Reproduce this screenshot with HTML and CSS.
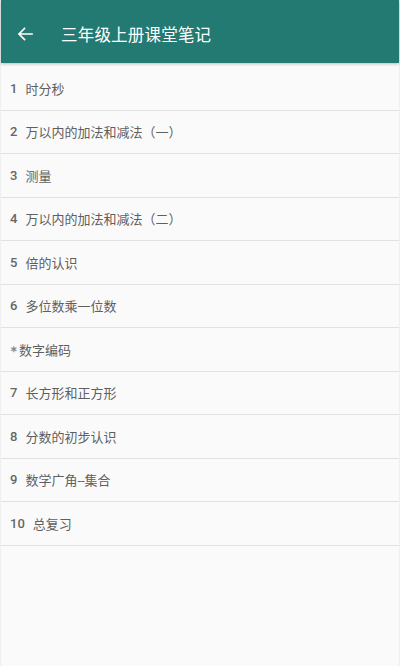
FILE: index.html
```html
<!DOCTYPE html>
<html lang="zh">
<head>
<meta charset="utf-8">
<link rel="stylesheet" href="styles.css">
</head>
<body>
<div class="app">
  <header class="toolbar">
    <svg class="back" viewBox="0 0 24 24" width="24" height="24"><path d="M19 12H6M11.5 6.5L6 12l5.5 5.5" fill="none" stroke="#fff" stroke-width="1.7" stroke-linecap="square"/></svg>
    <h1 class="title">三年级上册课堂笔记</h1>
  </header>
  <ul class="list">
    <li class="row"><span class="num">1</span>时分秒</li>
    <li class="row"><span class="num">2</span>万以内的加法和减法（一）</li>
    <li class="row"><span class="num">3</span>测量</li>
    <li class="row"><span class="num">4</span>万以内的加法和减法（二）</li>
    <li class="row"><span class="num">5</span>倍的认识</li>
    <li class="row"><span class="num">6</span>多位数乘一位数</li>
    <li class="row"><span class="star">∗</span>数字编码</li>
    <li class="row"><span class="num">7</span>长方形和正方形</li>
    <li class="row"><span class="num">8</span>分数的初步认识</li>
    <li class="row"><span class="num">9</span>数学广角--集合</li>
    <li class="row"><span class="num">10</span>总复习</li>
  </ul>
</div>
</body>
</html>
```

FILE: styles.css
```css
html, body {
  margin: 0;
  padding: 0;
  background: #fafafa;
}
body {
  font-family: Roboto, "Noto Sans CJK SC", sans-serif;
  width: 400px;
  height: 666px;
  overflow: hidden;
}
.app {
  height: 666px;
  background: #fafafa;
  border-left: 1px solid #efefef;
  border-right: 1px solid #efefef;
  box-sizing: border-box;
}
.toolbar {
  height: 63px;
  background: #227a72;
  display: flex;
  align-items: center;
  padding-left: 12px;
  padding-top: 4px;
  box-sizing: border-box;
  box-shadow: 0 1px 3px rgba(0,0,0,0.25);
}
.back {
  width: 24px;
  height: 24px;
  flex: none;
}
.title {
  margin: 0 0 0 24px;
  font-size: 16.5px;
  font-weight: 400;
  color: #ffffff;
  letter-spacing: 0.2px;
}
.list {
  list-style: none;
  margin: 0;
  padding: 4px 0 0 0;
}
.row {
  height: 43.5px;
  box-sizing: border-box;
  border-bottom: 1.5px solid #e2e2e2;
  display: flex;
  align-items: center;
  padding-left: 9px;
  font-size: 13px;
  color: #5f5f5f;
}
.num {
  margin-right: 8px;
  font-weight: 500;
  color: #666;
}
.star {
  color: #8a8a8a;
  font-size: 9px;
  margin-right: 1px;
  font-weight: 700;
}
```
